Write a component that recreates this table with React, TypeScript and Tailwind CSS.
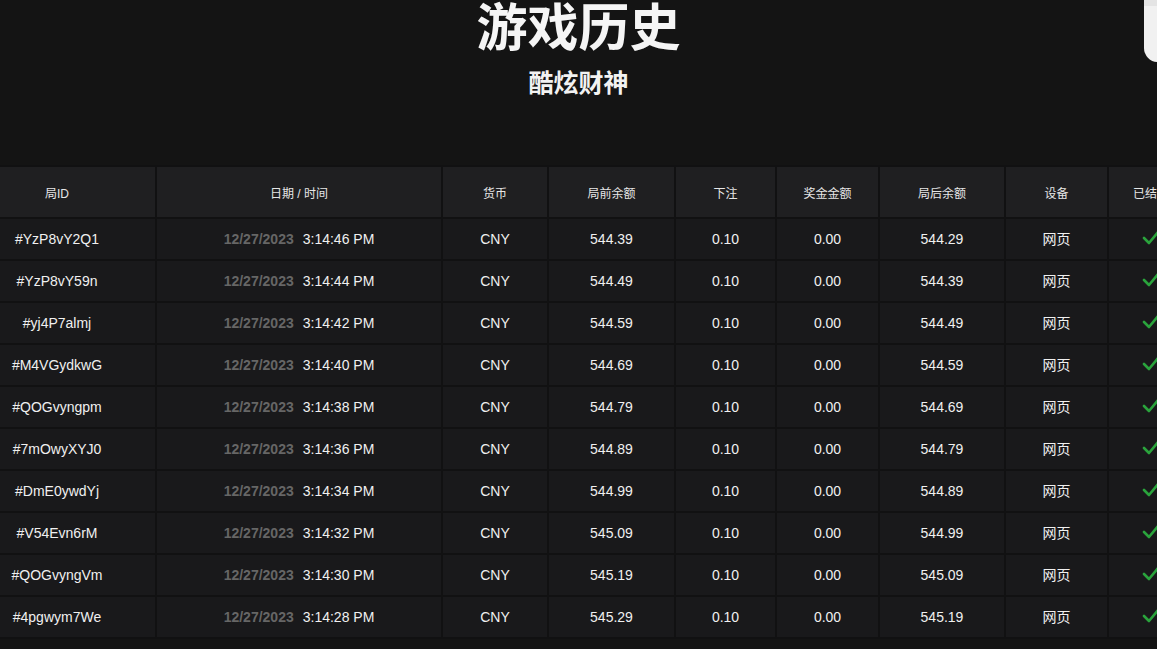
import React from 'react';

interface Round {
    id: string;
    time: string;
    before: string;
    after: string;
}

const rounds: Round[] = [
    { id: '#YzP8vY2Q1', time: '3:14:46 PM', before: '544.39', after: '544.29' },
    { id: '#YzP8vY59n', time: '3:14:44 PM', before: '544.49', after: '544.39' },
    { id: '#yj4P7almj', time: '3:14:42 PM', before: '544.59', after: '544.49' },
    { id: '#M4VGydkwG', time: '3:14:40 PM', before: '544.69', after: '544.59' },
    { id: '#QOGvyngpm', time: '3:14:38 PM', before: '544.79', after: '544.69' },
    { id: '#7mOwyXYJ0', time: '3:14:36 PM', before: '544.89', after: '544.79' },
    { id: '#DmE0ywdYj', time: '3:14:34 PM', before: '544.99', after: '544.89' },
    { id: '#V54Evn6rM', time: '3:14:32 PM', before: '545.09', after: '544.99' },
    { id: '#QOGvyngVm', time: '3:14:30 PM', before: '545.19', after: '545.09' },
    { id: '#4pgwym7We', time: '3:14:28 PM', before: '545.29', after: '545.19' },
];

// header label + column width (table is scrolled ~43px to the left)
const columns: [string, string][] = [
    ['局ID', 'w-[196px]'],
    ['日期 / 时间', 'w-[284px]'],
    ['货币', 'w-[104px]'],
    ['局前余额', 'w-[125px]'],
    ['下注', 'w-[99px]'],
    ['奖金金额', 'w-[101px]'],
    ['局后余额', 'w-[124px]'],
    ['设备', 'w-[101px]'],
    ['已结算', 'w-[84px]'],
];

const Check = () => (
    <svg width="18" height="16" viewBox="0 0 18 16" className="inline-block align-[-1px]">
        <path d="M2 9 L7 14 L17 2" fill="none" stroke="#2aa33c" strokeWidth="2.6" strokeLinecap="round" strokeLinejoin="round" />
    </svg>
);

const App: React.FC = () => {
    return (
        <div className="relative h-[649px] overflow-hidden bg-[#141414] text-white font-['Liberation_Sans','Noto_Sans_CJK_SC',sans-serif]">
            <div className="absolute top-0 left-[1144px] w-[40px] h-[62px] bg-[#f1f1f1] rounded-bl-[14px] border-t-[6px] border-[#e4e4e4]" />

            <div className="flex flex-col items-center">
                <h1 className="mt-[-11px] text-[51px] leading-[70px] font-bold font-['Noto_Sans_CJK_SC',sans-serif] text-[#f5f5f5]">游戏历史</h1>
                <h2 className="mt-[5px] text-[25px] leading-[34px] font-bold font-['Noto_Sans_CJK_SC',sans-serif] text-[#f2f2f2]">酷炫财神</h2>
            </div>

            <div className="mt-[67px] overflow-hidden bg-[#111112]">
                <table className="ml-[-43px] w-[1238px] table-fixed border-separate border-spacing-[2px] text-center">
                    <thead>
                        <tr>
                            {columns.map(([h, w]) => (
                                <th key={h} className={`${w} h-[50px] pt-[3px] bg-[#1f1f21] text-[12px] font-normal text-[#e6e6e6] whitespace-nowrap`}>{h}</th>
                            ))}
                        </tr>
                    </thead>
                    <tbody>
                        {rounds.map(r => (
                            <tr key={r.id} className="text-[14px] text-[#f0f0f0]">
                                <td className="h-[40px] bg-[#19191b]">{r.id}</td>
                                <td className="bg-[#19191b] whitespace-nowrap">
                                    <span className="font-bold text-[#666666]">12/27/2023</span>
                                    <span className="ml-[9px]">{r.time}</span>
                                </td>
                                <td className="bg-[#19191b]">CNY</td>
                                <td className="bg-[#19191b]">{r.before}</td>
                                <td className="bg-[#19191b]">0.10</td>
                                <td className="bg-[#19191b]">0.00</td>
                                <td className="bg-[#19191b]">{r.after}</td>
                                <td className="bg-[#19191b]">网页</td>
                                <td className="bg-[#19191b]"><Check /></td>
                            </tr>
                        ))}
                    </tbody>
                </table>
            </div>
        </div>
    );
};

export default App;
